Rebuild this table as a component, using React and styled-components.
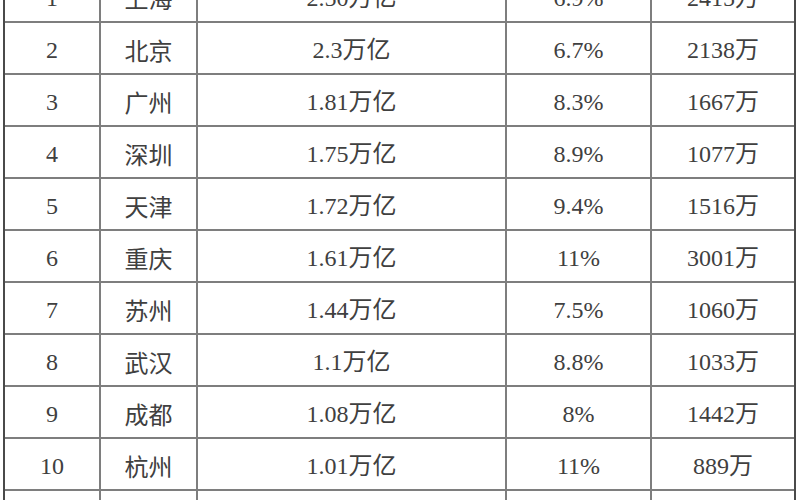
import React from 'react';
import styled, { createGlobalStyle } from 'styled-components';

const GlobalStyle = createGlobalStyle`
  *, *::before, *::after { box-sizing: border-box; margin: 0; padding: 0; }

  body {
    background: #ffffff;
    color: #333333;
    font-family: 'Liberation Serif', 'Noto Sans CJK SC', serif;
    overflow: hidden;
  }
`;

const Page = styled.div`
  width: 800px;
  height: 500px;
  overflow: hidden;
  background: #ffffff;
`;

// the screenshot is cropped: the first row sits partly above the window
const Table = styled.div`
  display: grid;
  grid-template-columns: 94px 95px 307px 143px 142px;
  grid-auto-rows: 50px;
  gap: 2px;
  width: 793px;
  margin: -31px 0 0 3px;
  background: #7e7e7e;
  border: 2px solid #4a4a4a;
`;

const Cell = styled.div`
  background: #ffffff;
  display: flex;
  align-items: center;
  justify-content: center;
  padding-top: 3px;
  font-size: 24px;
  color: #404040;
  line-height: 1;
  white-space: nowrap;
`;

const City = styled.span`
  font-family: 'Noto Sans CJK SC', sans-serif;
  font-weight: 400;
`;

const rows = [
  { rank: '1', city: '上海', gdp: '2.50万亿', growth: '6.9%', pop: '2415万' },
  { rank: '2', city: '北京', gdp: '2.3万亿', growth: '6.7%', pop: '2138万' },
  { rank: '3', city: '广州', gdp: '1.81万亿', growth: '8.3%', pop: '1667万' },
  { rank: '4', city: '深圳', gdp: '1.75万亿', growth: '8.9%', pop: '1077万' },
  { rank: '5', city: '天津', gdp: '1.72万亿', growth: '9.4%', pop: '1516万' },
  { rank: '6', city: '重庆', gdp: '1.61万亿', growth: '11%', pop: '3001万' },
  { rank: '7', city: '苏州', gdp: '1.44万亿', growth: '7.5%', pop: '1060万' },
  { rank: '8', city: '武汉', gdp: '1.1万亿', growth: '8.8%', pop: '1033万' },
  { rank: '9', city: '成都', gdp: '1.08万亿', growth: '8%', pop: '1442万' },
  { rank: '10', city: '杭州', gdp: '1.01万亿', growth: '11%', pop: '889万' },
  { rank: '', city: '', gdp: '', growth: '', pop: '' },
];

export default function App() {
  return (
    <Page>
      <GlobalStyle />
      <Table>
        {rows.map((r, i) => (
          <React.Fragment key={i}>
            <Cell>{r.rank}</Cell>
            <Cell><City>{r.city}</City></Cell>
            <Cell>{r.gdp}</Cell>
            <Cell>{r.growth}</Cell>
            <Cell>{r.pop}</Cell>
          </React.Fragment>
        ))}
      </Table>
    </Page>
  );
}
